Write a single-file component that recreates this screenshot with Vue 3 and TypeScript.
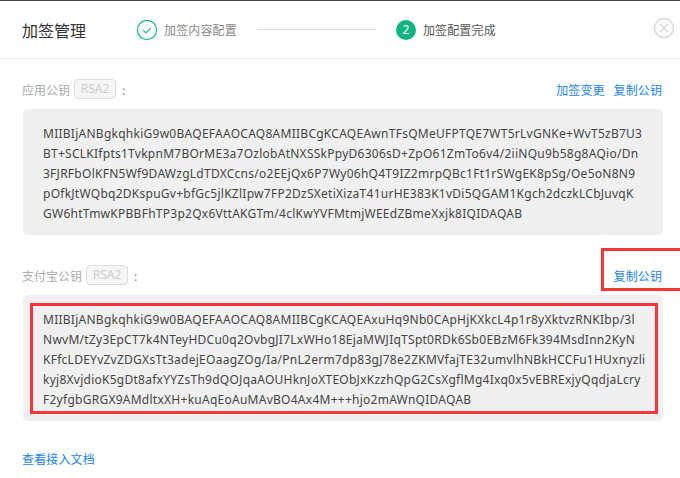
<script setup lang="ts">
interface KeySection {
  label: string
  links: string[]
  lines: string[]
  highlighted: boolean
}

const sections: KeySection[] = [
  {
    label: '应用公钥',
    links: ['加签变更', '复制公钥'],
    highlighted: false,
    lines: [
      'MIIBIjANBgkqhkiG9w0BAQEFAAOCAQ8AMIIBCgKCAQEAwnTFsQMeUFPTQE7WT5rLvGNKe+WvT5zB7U3',
      'BT+SCLKIfpts1TvkpnM7BOrME3a7OzlobAtNXSSkPpyD6306sD+ZpO61ZmTo6v4/2iiNQu9b58g8AQio/Dn',
      '3FJRFbOlKFN5Wf9DAWzgLdTDXCcns/o2EEjQx6P7Wy06hQ4T9IZ2mrpQBc1Ft1rSWgEK8pSg/Oe5oN8N9',
      'pOfkJtWQbq2DKspuGv+bfGc5jlKZlIpw7FP2DzSXetiXizaT41urHE383K1vDi5QGAM1Kgch2dczkLCbJuvqK',
      'GW6htTmwKPBBFhTP3p2Qx6VttAKGTm/4clKwYVFMtmjWEEdZBmeXxjk8IQIDAQAB',
    ],
  },
  {
    label: '支付宝公钥',
    links: ['复制公钥'],
    highlighted: true,
    lines: [
      'MIIBIjANBgkqhkiG9w0BAQEFAAOCAQ8AMIIBCgKCAQEAxuHq9Nb0CApHjKXkcL4p1r8yXktvzRNKIbp/3l',
      'NwvM/tZy3EpCT7k4NTeyHDCu0q2OvbgJI7LxWHo18EjaMWJIqTSpt0RDk6Sb0EBzM6Fk394MsdInn2KyN',
      'KFfcLDEYvZvZDGXsTt3adejEOaagZOg/Ia/PnL2erm7dp83gJ78e2ZKMVfajTE32umvlhNBkHCCFu1HUxnyzli',
      'kyj8XvjdioK5gDt8afxYYZsTh9dQOJqaAOUHknJoXTEObJxKzzhQpG2CsXgflMg4Ixq0x5vEBRExjyQqdjaLcry',
      'F2yfgbGRGX9AMdltxXH+kuAqEoAuMAvBO4Ax4M+++hjo2mAWnQIDAQAB',
    ],
  },
]
</script>

<template>
  <div class="dialog">
    <header class="header">
      <h1 class="title">加签管理</h1>
      <div class="step done">
        <svg class="step-icon" width="22" height="22" viewBox="0 0 22 22">
          <circle cx="11" cy="11" r="9.6" fill="none" stroke="#1dbb8c" stroke-width="1.2" />
          <path d="M7.2 11.2l2.8 2.8 4.8-5.2" fill="none" stroke="#1dbb8c" stroke-width="1.2" />
        </svg>
        <span>加签内容配置</span>
      </div>
      <div class="connector"></div>
      <div class="step current">
        <span class="step-num">2</span>
        <span>加签配置完成</span>
      </div>
      <svg class="close" width="22" height="22" viewBox="0 0 22 22">
        <circle cx="11" cy="11" r="9.5" fill="none" stroke="#d9d9d9" stroke-width="1.6" />
        <path d="M6.8 6.8l8.4 8.4M15.2 6.8l-8.4 8.4" fill="none" stroke="#d9d9d9" stroke-width="1.6" />
      </svg>
    </header>

    <main class="body">
      <section v-for="s in sections" :key="s.label" class="section">
        <div class="row">
          <span class="label">{{ s.label }}</span>
          <span class="badge">RSA2</span>
          <span class="colon">:</span>
          <div class="links">
            <a v-for="l in s.links" :key="l" class="link">{{ l }}</a>
          </div>
          <div v-if="s.highlighted" class="mark mark-link"></div>
        </div>
        <div class="panel">
          <div v-for="line in s.lines" :key="line" class="key-line">{{ line }}</div>
          <div v-if="s.highlighted" class="mark mark-panel"></div>
        </div>
      </section>
      <a class="link doc">查看接入文档</a>
    </main>
  </div>
</template>

<style>
html, body { margin: 0; background: #fff; }
</style>

<style scoped>
.dialog {
  width: 680px;
  height: 478px;
  overflow: hidden;
  background: #fff;
  border-top: 1px solid #444;
  box-sizing: border-box;
  font-family: "Noto Sans", "Noto Sans CJK SC", sans-serif;
  font-size: 12px;
}
.header {
  display: flex;
  align-items: center;
  height: 57px;
  padding: 0 5px 0 22px;
  border-bottom: 1px solid #eee;
}
.title {
  margin: 0;
  width: 114px;
  font-size: 16px;
  font-weight: 400;
  color: #333;
  font-family: "Noto Sans CJK SC", sans-serif;
}
.step {
  display: flex;
  align-items: center;
  gap: 6px;
  letter-spacing: 0.15px;
  font-family: "Noto Sans CJK SC", sans-serif;
}
.step.done { color: #888; }
.step.current { color: #555; }
.connector {
  width: 119px;
  height: 1px;
  margin: 0 20px;
  background: #ddd;
}
.step-num {
  width: 20px;
  height: 20px;
  margin-right: 1px;
  border-radius: 50%;
  background: #0fb47f;
  color: #fff;
  text-align: center;
  line-height: 20px;
  font-family: "Noto Sans", sans-serif;
}
.close { margin-left: auto; margin-top: -3px; }
.body { padding: 20px 17px 0 23px; }
.section { margin-bottom: 30px; }
.section:nth-of-type(2) { margin-bottom: 28px; }
.row {
  position: relative;
  display: flex;
  align-items: center;
  height: 20px;
  margin: 0 0 10px -1px;
  font-family: "Noto Sans CJK SC", sans-serif;
}
.label { color: #aaa; }
.badge {
  box-sizing: border-box;
  width: 42px;
  height: 20px;
  margin-left: 4px;
  border: 1px solid #ddd;
  border-radius: 4px;
  background: #f6f6f6;
  color: #ccc;
  text-align: center;
  line-height: 18px;
  font-family: "Noto Sans", sans-serif;
}
.colon { margin-left: 6px; color: #888; }
.links { display: flex; gap: 9px; margin-left: auto; margin-right: 1px; letter-spacing: 0.1px; }
.link { color: #1a82f0; }
.doc {
  display: block;
  height: 20px;
  line-height: 20px;
  margin-left: -1px;
  letter-spacing: 0.15px;
  font-family: "Noto Sans CJK SC", sans-serif;
}
.panel {
  position: relative;
  box-sizing: border-box;
  height: 126px;
  padding: 15px 0 11px 20px;
  border-radius: 5px;
  background: #f0f0f0;
  color: #444;
  letter-spacing: 0.26px;
}
.key-line {
  height: 20px;
  line-height: 20px;
  white-space: nowrap;
}
.mark {
  position: absolute;
  box-sizing: border-box;
  border: 3px solid #f93636;
  pointer-events: none;
}
.mark-link { left: 579px; top: -17px; width: 79px; height: 43px; border-right-width: 0; }
.mark-panel { left: 7px; top: 8px; width: 628px; height: 111px; }
</style>
